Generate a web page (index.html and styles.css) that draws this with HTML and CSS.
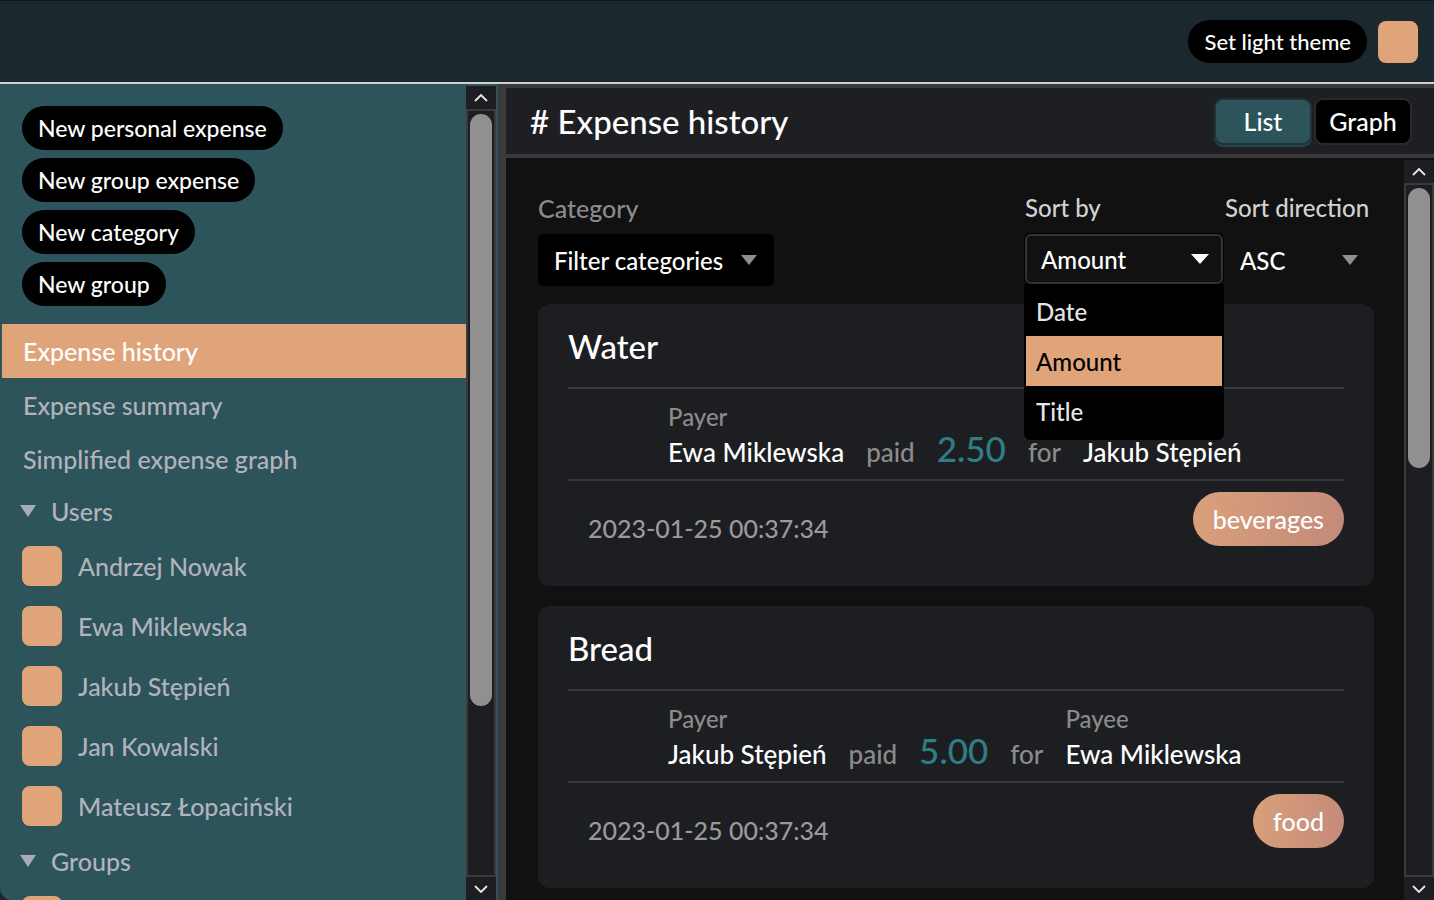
FILE: index.html
```html
<!DOCTYPE html>
<html lang="en">
<head>
<meta charset="utf-8">
<title>Expense history</title>
<link rel="stylesheet" href="styles.css">
</head>
<body>
<div class="app">
  <header class="topbar">
    <button class="pill theme-btn">Set light theme</button>
    <div class="swatch top-swatch"></div>
  </header>
  <div class="layout">
    <aside class="sidebar">
      <div class="side-content">
        <div class="actions">
          <button class="pill">New personal expense</button>
          <button class="pill">New group expense</button>
          <button class="pill">New category</button>
          <button class="pill">New group</button>
        </div>
        <nav class="nav">
          <a class="nav-item active">Expense history</a>
          <a class="nav-item">Expense summary</a>
          <a class="nav-item">Simplified expense graph</a>
          <div class="section"><svg class="tri" width="16" height="12" viewBox="0 0 16 12"><polygon points="0,0 16,0 8,12" fill="#a9abb6"/></svg>Users</div>
          <div class="user"><span class="swatch"></span>Andrzej Nowak</div>
          <div class="user"><span class="swatch"></span>Ewa Miklewska</div>
          <div class="user"><span class="swatch"></span>Jakub Stępień</div>
          <div class="user"><span class="swatch"></span>Jan Kowalski</div>
          <div class="user"><span class="swatch"></span>Mateusz Łopaciński</div>
          <div class="section"><svg class="tri" width="16" height="12" viewBox="0 0 16 12"><polygon points="0,0 16,0 8,12" fill="#a9abb6"/></svg>Groups</div>
          <div class="user"><span class="swatch"></span></div>
        </nav>
      </div>
      <div class="scrollbar side-sb">
        <div class="sb-btn"><svg width="14" height="8" viewBox="0 0 14 8"><polyline points="1,7 7,1 13,7" fill="none" stroke="#e8e8e8" stroke-width="1.8"/></svg></div>
        <div class="sb-track"><div class="sb-thumb side-thumb"></div></div>
        <div class="sb-btn"><svg width="14" height="8" viewBox="0 0 14 8"><polyline points="1,1 7,7 13,1" fill="none" stroke="#e8e8e8" stroke-width="1.8"/></svg></div>
      </div>
    </aside>
    <main class="main">
      <div class="main-header">
        <h1 class="page-title"># Expense history</h1>
        <div class="toggle">
          <button class="tg active">List</button>
          <button class="tg">Graph</button>
        </div>
      </div>
      <div class="main-body">
        <div class="content">
          <div class="filters">
            <div class="field">
              <label class="flabel muted">Category</label>
              <div class="select filter-select">Filter categories
                <svg width="16" height="10" viewBox="0 0 16 10"><polygon points="0,0 16,0 8,10" fill="#8f8f8f"/></svg>
              </div>
            </div>
            <div class="sorts">
              <div class="field sortby">
                <label class="flabel light">Sort by</label>
                <div class="select sort-select"><span>Amount</span>
                  <svg width="18" height="10" viewBox="0 0 18 10"><polygon points="0,0 18,0 9,10" fill="#ffffff"/></svg>
                  <ul class="dropdown">
                    <li>Date</li>
                    <li class="selected">Amount</li>
                    <li>Title</li>
                  </ul>
                </div>
              </div>
              <div class="field dir">
                <label class="flabel light">Sort direction</label>
                <div class="select plain-select"><span>ASC</span>
                  <svg width="16" height="10" viewBox="0 0 16 10"><polygon points="0,0 16,0 8,10" fill="#8f8f8f"/></svg>
                </div>
              </div>
            </div>
          </div>

          <div class="cards">
            <article class="card">
              <h2 class="card-title">Water</h2>
              <div class="rule"></div>
              <div class="transfer">
                <span class="tlabel">Payer</span>
                <span></span><span></span><span></span>
                <span class="tlabel covered">Payee</span>
                <span class="tname">Ewa Miklewska</span>
                <span class="tword">paid</span>
                <span class="amount">2.50</span>
                <span class="tword">for</span>
                <span class="tname">Jakub Stępień</span>
              </div>
              <div class="rule"></div>
              <div class="card-foot">
                <span class="date">2023-01-25 00:37:34</span>
                <span class="badge">beverages</span>
              </div>
            </article>
            <article class="card">
              <h2 class="card-title">Bread</h2>
              <div class="rule"></div>
              <div class="transfer">
                <span class="tlabel">Payer</span>
                <span></span><span></span><span></span>
                <span class="tlabel">Payee</span>
                <span class="tname">Jakub Stępień</span>
                <span class="tword">paid</span>
                <span class="amount">5.00</span>
                <span class="tword">for</span>
                <span class="tname">Ewa Miklewska</span>
              </div>
              <div class="rule"></div>
              <div class="card-foot">
                <span class="date">2023-01-25 00:37:34</span>
                <span class="badge">food</span>
              </div>
            </article>
          </div>
        </div>
        <div class="scrollbar main-sb">
          <div class="sb-btn"><svg width="14" height="8" viewBox="0 0 14 8"><polyline points="1,7 7,1 13,7" fill="none" stroke="#e8e8e8" stroke-width="1.8"/></svg></div>
          <div class="sb-track"><div class="sb-thumb main-thumb"></div></div>
          <div class="sb-btn"><svg width="14" height="8" viewBox="0 0 14 8"><polyline points="1,1 7,7 13,1" fill="none" stroke="#e8e8e8" stroke-width="1.8"/></svg></div>
        </div>
      </div>
    </main>
  </div>
</div>
</body>
</html>
```

FILE: styles.css
```css
* { box-sizing: border-box; }
html, body { margin: 0; padding: 0; }
body {
  width: 1434px;
  height: 900px;
  overflow: hidden;
  background: #1b282d;
  font-family: "Lato", "Noto Sans", sans-serif;
  font-weight: 500;
  color: #ffffff;
}
button { font-family: inherit; font-weight: inherit; }
.app { display: flex; flex-direction: column; height: 900px; }

/* top bar */
.topbar {
  height: 84px;
  flex: none;
  display: flex;
  align-items: center;
  justify-content: flex-end;
  gap: 11px;
  padding-right: 16px;
  background: #1b282d;
  border-top: 1px solid #0f171a;
  border-bottom: 2px solid #d2d2d2;
}
.pill {
  background: #000;
  color: #fff;
  border: none;
  border-radius: 22px;
  height: 44px;
  padding: 0 16px;
  font-size: 23px;
  line-height: 44px;
  white-space: nowrap;
  text-align: left;
}
.theme-btn { height: 43px; font-size: 22px; }
.swatch {
  display: block;
  width: 40px;
  height: 40px;
  border-radius: 8px;
  background: #e0a47a;
  flex: none;
}
.top-swatch { height: 42px; }

/* layout */
.layout { flex: 1; display: flex; min-height: 0; }

.sidebar {
  width: 498px;
  flex: none;
  display: flex;
  background: #2c545a;
  padding: 2px 2px 0 2px;
  border-bottom-left-radius: 12px;
  overflow: hidden;
}
.side-content {
  flex: 1;
  overflow: hidden;
  padding-top: 20px;
}
.actions {
  display: flex;
  flex-direction: column;
  align-items: flex-start;
  gap: 8px;
  padding-left: 20px;
}
.nav { margin-top: 18px; display: flex; flex-direction: column; }
.nav-item {
  height: 54px;
  display: flex;
  align-items: center;
  padding-left: 21px;
  font-size: 25px;
  color: #b2b3bd;
}
.nav-item.active { background: #e0a47a; color: #fff; }
.section {
  height: 50px;
  display: flex;
  align-items: center;
  padding-left: 18px;
  gap: 15px;
  font-size: 25px;
  color: #b2b3bd;
}
.user {
  height: 60px;
  display: flex;
  align-items: center;
  gap: 16px;
  padding-left: 20px;
  font-size: 25px;
  color: #b2b3bd;
}

/* scrollbars */
.scrollbar {
  width: 30px;
  flex: none;
  display: flex;
  flex-direction: column;
  background: #1d1e22;
}
.sb-btn {
  height: 23px;
  flex: none;
  display: flex;
  align-items: center;
  justify-content: center;
}
.sb-track {
  flex: 1;
  border: 2px solid #3a3a3a;
  padding: 3px 2px;
}
.sb-thumb {
  background: #909090;
  border-radius: 11px;
}
.side-thumb { height: 592px; }
.main-thumb { height: 280px; }
.main-sb { margin-top: 2px; }

/* main */
.main {
  flex: 1;
  min-width: 0;
  display: flex;
  flex-direction: column;
  background: #3a3a3a;
  padding: 4px 0 0 8px;
}
.main-header {
  height: 66px;
  flex: none;
  display: flex;
  align-items: center;
  justify-content: space-between;
  padding: 0 22px 0 24px;
  background: #1e1f23;
  margin-bottom: 4px;
}
.page-title {
  margin: 0;
  font-size: 33px;
  font-weight: 500;
}
.toggle { display: flex; gap: 2px; }
.tg {
  width: 98px;
  height: 47px;
  border-radius: 9px;
  border: 2px solid #2a2a2a;
  background: #000;
  color: #fff;
  font-size: 25px;
  padding: 0;
}
.tg.active {
  background: #2c545a;
  border-color: #1f3236;
  box-shadow: 0 2px 0 #24464b;
}

.main-body {
  flex: 1;
  min-height: 0;
  display: flex;
  background: #111112;
}
.content {
  flex: 1;
  min-width: 0;
  overflow: hidden;
  padding: 35px 30px 0 32px;
}

/* filters */
.filters { display: flex; justify-content: space-between; align-items: flex-start; }
.field { display: flex; flex-direction: column; gap: 11px; }
.flabel { font-size: 24px; line-height: 30px; }
.flabel.muted { color: #8b8b8b; font-size: 25px; }
.flabel.light { color: #d2d2d2; }
.select {
  position: relative;
  display: flex;
  align-items: center;
  height: 52px;
  font-size: 24px;
  color: #fff;
  border-radius: 6px;
}
.filter-select {
  background: #000;
  padding: 0 17px 0 16px;
  gap: 18px;
}
.sorts { display: flex; gap: 2px; }
.sortby { width: 198px; margin-left: 2px; }
.sort-select {
  height: 50px;
  justify-content: space-between;
  padding: 0 12px 0 14px;
  background: #111112;
  border: 2px solid #333;
  box-shadow: 0 0 0 1px #000;
}
.dir { width: 149px; }
.plain-select {
  justify-content: space-between;
  padding: 0 16px 0 15px;
}
.dropdown {
  position: absolute;
  top: 48px;
  left: -3px;
  width: 200px;
  margin: 0;
  padding: 2px 2px 4px;
  list-style: none;
  background: #000;
  border-radius: 0 0 6px 6px;
  z-index: 5;
}
.dropdown li {
  height: 50px;
  display: flex;
  align-items: center;
  padding-left: 10px;
  font-size: 24px;
  color: #e6e6e6;
}
.dropdown li.selected { background: #e0a47a; color: #000; }

/* cards */
.cards { margin-top: 18px; display: flex; flex-direction: column; gap: 20px; }
.card {
  background: #1d1e22;
  border-radius: 12px;
  padding: 0 30px;
}
.card-title {
  margin: 0;
  padding: 22px 0 21px;
  font-size: 33px;
  line-height: 40px;
  font-weight: 500;
}
.rule { height: 2px; background: #38393c; }
.transfer {
  display: grid;
  grid-template-columns: repeat(5, auto);
  justify-content: start;
  align-items: baseline;
  column-gap: 22px;
  padding: 14px 0 11px 100px;
}
.tlabel { font-size: 24px; line-height: 27px; color: #8b8b8b; }
.covered { visibility: hidden; }
.tname { font-size: 26px; line-height: 32px; color: #fff; }
.tword { font-size: 26px; color: #8b8b8b; }
.amount { font-size: 35px; line-height: 36px; color: #2f7e86; }
.card-foot {
  display: flex;
  justify-content: space-between;
  align-items: flex-start;
  padding: 11px 0 40px;
}
.date {
  padding: 21px 0 0 20px;
  font-size: 25px;
  line-height: 30px;
  color: #9a9a9a;
}
.badge {
  height: 54px;
  line-height: 54px;
  padding: 0 20px;
  border-radius: 27px;
  font-size: 25px;
  color: #fff;
  background: linear-gradient(100deg, #daa07a 0%, #c28a7a 100%);
}
```
